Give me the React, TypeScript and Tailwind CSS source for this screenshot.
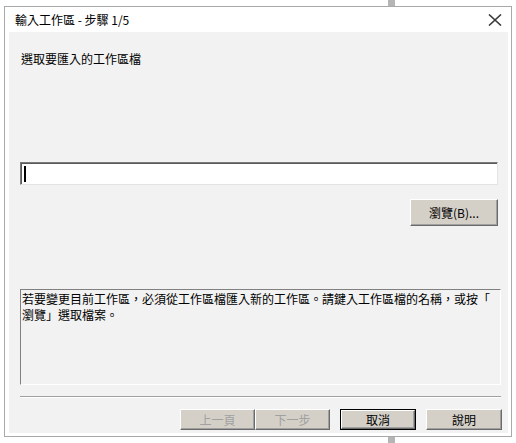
const font = { fontFamily: '"Noto Sans CJK TC", "Noto Sans", sans-serif' };

const ClassicButton = ({
  label,
  disabled,
  isDefault,
  className,
}: {
  label: string;
  disabled?: boolean;
  isDefault?: boolean;
  className: string;
}) => {
  const inner = (
    <div
      className={`flex h-full w-full items-center justify-center border border-t-white border-l-white border-r-[#6a6a6a] border-b-[#6a6a6a] bg-[#d4d0c8] shadow-[inset_-1px_-1px_0_#a0a0a0] text-[12px] leading-none ${
        disabled ? "text-[#a0a0a0]" : "text-black"
      }`}
    >
      {label}
    </div>
  );
  return (
    <div className={`${className} ${isDefault ? "border border-black" : ""}`}>
      {inner}
    </div>
  );
};

export default function App() {
  return (
    <div className="h-[443px] w-[516px] overflow-hidden bg-white" style={font}>
      <div className="ml-[388px] h-[6px] w-[7px] bg-[#b5b5b5]" />
      <div className="ml-[4px] flex h-[431px] w-[508px] flex-col border border-[#a9a9a9] bg-white">
        <div className="flex h-[25px] items-center justify-between pl-[10px] pr-[9px]">
          <span className="text-[12px] leading-none text-black">輸入工作區 - 步驟 1/5</span>
          <svg width="14" height="12" viewBox="0 0 14 12" className="mt-[1px]">
            <path d="M1 0.5 L13 11.5 M13 0.5 L1 11.5" stroke="#3a3a3a" strokeWidth="1.6" fill="none" />
          </svg>
        </div>
        <div className="ml-[4px] flex h-[401px] w-[499px] flex-col bg-[#f2f2f2] pl-[11px]">
          <div className="mt-[19px] pl-px text-[12px] leading-[16px] text-black">選取要匯入的工作區檔</div>

          <div className="mt-[95px] flex h-[23px] w-[478px] items-center border border-t-[#7a7a7a] border-l-[#7a7a7a] border-r-[#e3e3e3] border-b-[#e3e3e3] bg-white shadow-[inset_1px_1px_0_#5a5a5a] pl-[3px]">
            <div className="h-[16px] w-[2px] bg-black" />
          </div>

          <ClassicButton label="瀏覽(B)..." className="ml-[390px] mt-[14px] h-[27px] w-[88px]" />

          <div className="mt-[63px] h-[96px] w-[481px] border border-t-[#808080] border-l-[#808080] border-r-white border-b-white pl-px pt-[1px] text-[12px] leading-[16px] text-black whitespace-nowrap">
            若要變更目前工作區，必須從工作區檔匯入新的工作區。請鍵入工作區檔的名稱，或按「
            <br />
            瀏覽」選取檔案。
          </div>

          <div className="mt-[11px] h-[2px] w-[481px] border-t border-t-[#a0a0a0] border-b border-b-white" />

          <div className="mt-[11px] flex">
            <ClassicButton label="上一頁" disabled className="ml-[160px] h-[21px] w-[75px]" />
            <ClassicButton label="下一步" disabled className="h-[21px] w-[75px]" />
            <ClassicButton label="取消" isDefault className="ml-[10px] h-[21px] w-[76px]" />
            <ClassicButton label="說明" className="ml-[10px] h-[21px] w-[76px]" />
          </div>
        </div>
      </div>
      <div className="ml-[388px] h-[6px] w-[7px] bg-[#b5b5b5]" />
    </div>
  );
}
